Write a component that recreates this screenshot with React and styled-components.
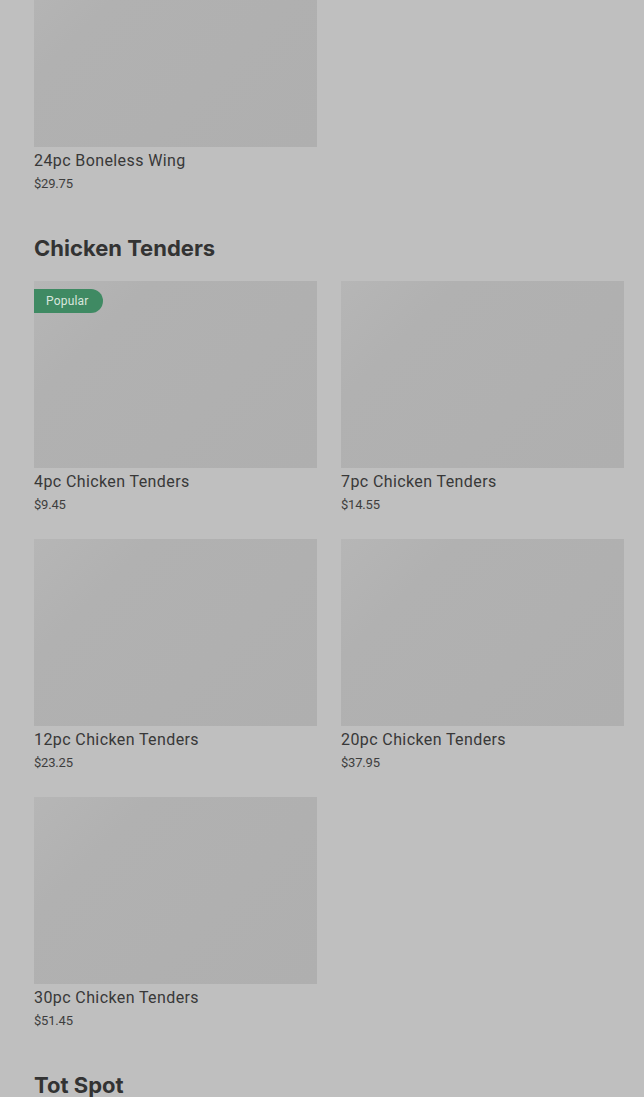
import React from "react";
import styled, { createGlobalStyle } from "styled-components";

const GlobalStyle = createGlobalStyle`
  html, body {
    margin: 0;
    padding: 0;
    background: #bfbfbf;
    overflow: hidden;
  }
`;

const sections = [
  {
    title: null,
    items: [{ name: "24pc Boneless Wing", price: "$29.75" }],
  },
  {
    title: "Chicken Tenders",
    items: [
      { name: "4pc Chicken Tenders", price: "$9.45", popular: true },
      { name: "7pc Chicken Tenders", price: "$14.55" },
      { name: "12pc Chicken Tenders", price: "$23.25" },
      { name: "20pc Chicken Tenders", price: "$37.95" },
      { name: "30pc Chicken Tenders", price: "$51.45" },
    ],
  },
  { title: "Tot Spot", items: [] },
];

export default function App() {
  return (
    <>
      <GlobalStyle />
      <Page>
        {sections.map((section, i) => (
          <Section key={i}>
            {section.title && <Heading>{section.title}</Heading>}
            {section.items.length > 0 && (
              <Grid>
                {section.items.map((item) => (
                  <Card key={item.name}>
                    <Thumb>
                      {item.popular && <Badge>Popular</Badge>}
                    </Thumb>
                    <Name>{item.name}</Name>
                    <Price>{item.price}</Price>
                  </Card>
                ))}
              </Grid>
            )}
          </Section>
        ))}
      </Page>
    </>
  );
}

const Page = styled.div`
  height: 1097px;
  overflow: hidden;
  background: #bfbfbf;
  padding: 0 20px 0 34px;
  box-sizing: border-box;
  display: flex;
  flex-direction: column;
  gap: 41px;
`;

const Section = styled.section`
  display: flex;
  flex-direction: column;
  &:first-child {
    margin-top: -40px;
  }
`;

const Heading = styled.h2`
  margin: 0 0 19px 0;
  font-family: Inter, "Liberation Sans", sans-serif;
  font-weight: 700;
  font-size: 22px;
  line-height: 28px;
  letter-spacing: 0;
  color: #333333;
`;

const Grid = styled.div`
  display: grid;
  grid-template-columns: repeat(2, 283px);
  column-gap: 24px;
  row-gap: 25px;
`;

const Card = styled.div`
  display: flex;
  flex-direction: column;
`;

const Thumb = styled.div`
  position: relative;
  height: 187px;
  background: linear-gradient(135deg, #b6b6b6 0%, #b1b1b1 25%, #afafaf 100%);
`;

const Badge = styled.span`
  position: absolute;
  top: 8px;
  left: 0;
  height: 24px;
  padding: 0 14px 0 12px;
  display: flex;
  align-items: center;
  background: #3f8a63;
  color: #d9e6de;
  font-family: Roboto, "Liberation Sans", sans-serif;
  font-size: 12px;
  letter-spacing: 0.2px;
  border-radius: 0 12px 12px 0;
`;

const Name = styled.div`
  margin-top: 3px;
  font-family: Roboto, "Liberation Sans", sans-serif;
  font-size: 16px;
  line-height: 22px;
  letter-spacing: 0.4px;
  color: #383838;
`;

const Price = styled.div`
  margin-top: 3px;
  font-family: Roboto, "Liberation Sans", sans-serif;
  font-size: 13px;
  line-height: 18px;
  letter-spacing: -0.2px;
  color: #3e3e3e;
`;
